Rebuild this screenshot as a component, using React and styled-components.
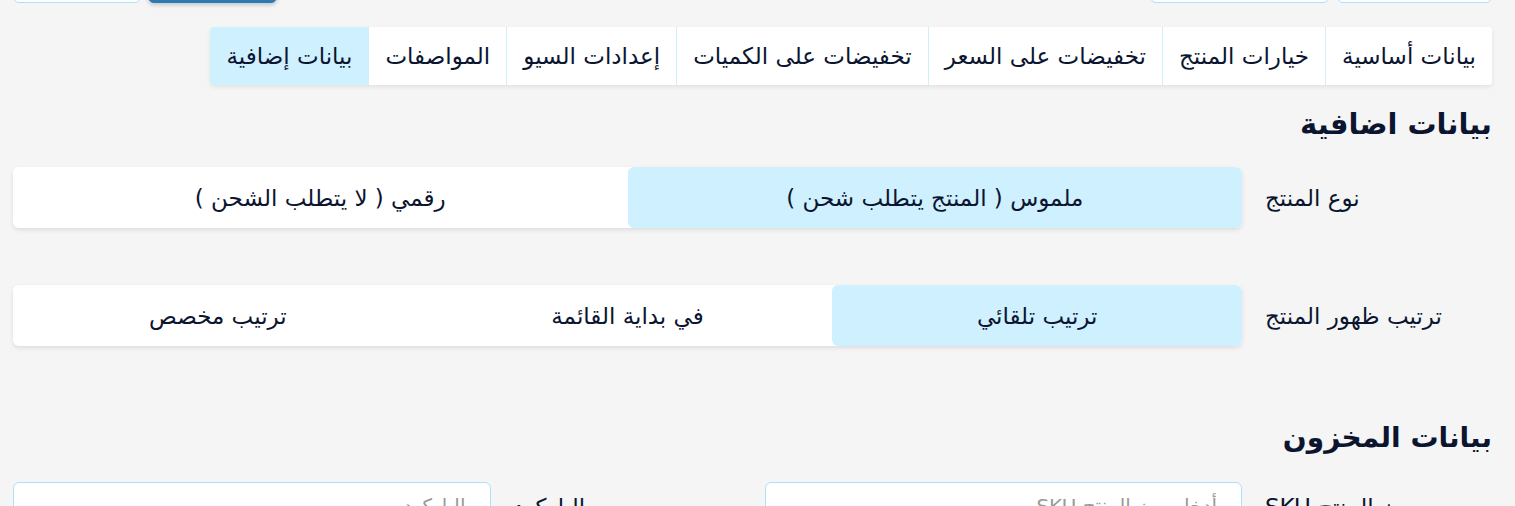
import React from "react";
import styled, { createGlobalStyle } from "styled-components";

const GlobalStyle = createGlobalStyle`
  body {
    margin: 0;
    background: #f5f5f5;
    font-family: "DejaVu Sans", "Noto Sans", sans-serif;
    color: #0b1530;
  }
`;

const Page = styled.div`
  direction: rtl;
  padding: 0 23px 0 13px;
  height: 506px;
  overflow: hidden;
`;

const TopBar = styled.div`
  height: 3px;
  display: flex;
  align-items: flex-end;
  justify-content: space-between;
`;

const TopGroup = styled.div`
  display: flex;
  gap: ${(p) => p.gap}px;
`;

const TopButton = styled.div`
  width: ${(p) => p.w}px;
  height: 40px;
  box-sizing: border-box;
  border-radius: 6px;
  background: ${(p) => (p.primary ? "#2d79b1" : "#fff")};
  border: 1px solid ${(p) => (p.primary ? "#2d79b1" : "#a9e1fa")};
  box-shadow: ${(p) => (p.primary ? "0 2px 4px rgba(0,0,0,0.2)" : "none")};
`;

const Tabs = styled.div`
  display: flex;
  margin-top: 24px;
  height: 58px;
  width: fit-content;
  background: #fff;
  border-radius: 4px;
  box-shadow: 0 2px 4px rgba(0, 0, 0, 0.08);
  overflow: hidden;
`;

const Tab = styled.div`
  display: flex;
  align-items: center;
  padding: 0 16px;
  font-size: 23px;
  background: ${(p) => (p.active ? "#cff0fe" : "#fff")};
  border-left: 1px solid ${(p) => (p.last ? "transparent" : "#cdeefd")};
  white-space: nowrap;
`;

const Heading = styled.h2`
  margin: 0;
  font-size: ${(p) => p.size || 29}px;
  font-weight: 700;
  line-height: 1;
  padding-top: ${(p) => p.top}px;
`;

const Row = styled.div`
  display: flex;
  align-items: center;
  margin-top: ${(p) => p.top}px;
`;

const Label = styled.div`
  width: 250px;
  flex-shrink: 0;
  box-sizing: border-box;
  padding-left: 23px;
  font-size: 23px;
  display: flex;
  justify-content: flex-end;
  white-space: nowrap;
`;

const Toggle = styled.div`
  flex: 1;
  display: flex;
  height: 61px;
  background: #fff;
  border-radius: 6px;
  box-shadow: 0 2px 4px rgba(0, 0, 0, 0.1);
  overflow: hidden;
`;

const Option = styled.div`
  flex: 1;
  display: flex;
  align-items: center;
  justify-content: center;
  font-size: 23px;
  background: ${(p) => (p.active ? "#cff0fe" : "#fff")};
  border-radius: 6px;
  white-space: nowrap;
`;

const FieldsGrid = styled.div`
  display: grid;
  grid-template-columns: 250px 1fr 274px 1fr;
  align-items: start;
  margin-top: ${(p) => p.top}px;
`;

const FieldLabel = styled.div`
  display: flex;
  justify-content: flex-end;
  padding: 12px 0 0 23px;
  font-size: 23px;
  white-space: nowrap;
`;

const Input = styled.div`
  height: 60px;
  box-sizing: border-box;
  background: #fff;
  border: 1px solid #a9e1fa;
  border-radius: 6px;
  padding: 11px 24px 0;
  font-size: 20px;
  color: #9a9a9a;
  white-space: nowrap;
`;

const tabs = [
  "بيانات أساسية",
  "خيارات المنتج",
  "تخفيضات على السعر",
  "تخفيضات على الكميات",
  "إعدادات السيو",
  "المواصفات",
  "بيانات إضافية",
];

export default function App() {
  return (
    <>
      <GlobalStyle />
      <Page>
        <TopBar>
          <TopGroup gap={8}>
            <TopButton w={155} />
            <TopButton w={179} />
          </TopGroup>
          <TopGroup gap={7}>
            <TopButton w={129} primary />
            <TopButton w={128} />
          </TopGroup>
        </TopBar>

        <Tabs>
          {tabs.map((t, i) => (
            <Tab key={t} active={i === tabs.length - 1} last={i === tabs.length - 1}>
              {t}
            </Tab>
          ))}
        </Tabs>

        <Heading top={25}>بيانات اضافية</Heading>

        <Row top={28}>
          <Label>نوع المنتج</Label>
          <Toggle>
            <Option active>ملموس ( المنتج يتطلب شحن )</Option>
            <Option>رقمي ( لا يتطلب الشحن )</Option>
          </Toggle>
        </Row>

        <Row top={57}>
          <Label>ترتيب ظهور المنتج</Label>
          <Toggle>
            <Option active>ترتيب تلقائي</Option>
            <Option>في بداية القائمة</Option>
            <Option>ترتيب مخصص</Option>
          </Toggle>
        </Row>

        <Heading top={78} size={28}>بيانات المخزون</Heading>

        <FieldsGrid top={30}>
          <FieldLabel>رمز المنتج SKU</FieldLabel>
          <Input>أدخل رمز المنتج SKU</Input>
          <FieldLabel>الباركود</FieldLabel>
          <Input>الباركود</Input>
        </FieldsGrid>
      </Page>
    </>
  );
}
